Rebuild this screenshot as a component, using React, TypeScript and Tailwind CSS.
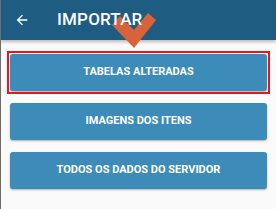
import React from 'react';

const items = ['TABELAS ALTERADAS', 'IMAGENS DOS ITENS', 'TODOS OS DADOS DO SERVIDOR'];

export default function App() {
  return (
    <div className="w-[276px] h-[209px] bg-[#fafafa] border-l border-[#6e6e6e] overflow-hidden relative" style={{ fontFamily: 'Roboto, "Liberation Sans", sans-serif' }}>
      <div className="h-[40px] bg-[#1f5c82] flex items-center shadow-[0_2px_3px_rgba(0,0,0,0.25)] relative z-10">
        <svg width="16" height="16" viewBox="0 0 24 24" className="ml-[13px] relative z-20">
          <path d="M20 11H7.83l5.59-5.59L12 4l-8 8 8 8 1.41-1.41L7.83 13H20v-2z" fill="white" />
        </svg>
        <svg width="60" height="60" viewBox="0 0 60 60" className="absolute left-[100px] top-0 overflow-visible">
          <polygon points="11,25 19,16 33,30 47,13 55,20 33,48" fill="#d8623c" />
        </svg>
        <span className="ml-[27px] text-white text-[17px] font-medium tracking-[0.2px] relative z-20">IMPORTAR</span>
      </div>
      <div className="flex flex-col gap-[12px] pl-[9px] pr-[9px] pt-[14px]">
        {items.map((t, i) => (
          <div key={t} className="relative">
            {i === 0 && <div className="absolute -inset-[3px] border-2 border-[#e8141c]" />}
            <div className="h-[37px] bg-[#3c8bb9] rounded-[3px] shadow-[0_1px_2px_rgba(0,0,0,0.3)] flex items-center justify-center text-white text-[11px] font-bold">
              {t}
            </div>
          </div>
        ))}
      </div>
    </div>
  );
}
